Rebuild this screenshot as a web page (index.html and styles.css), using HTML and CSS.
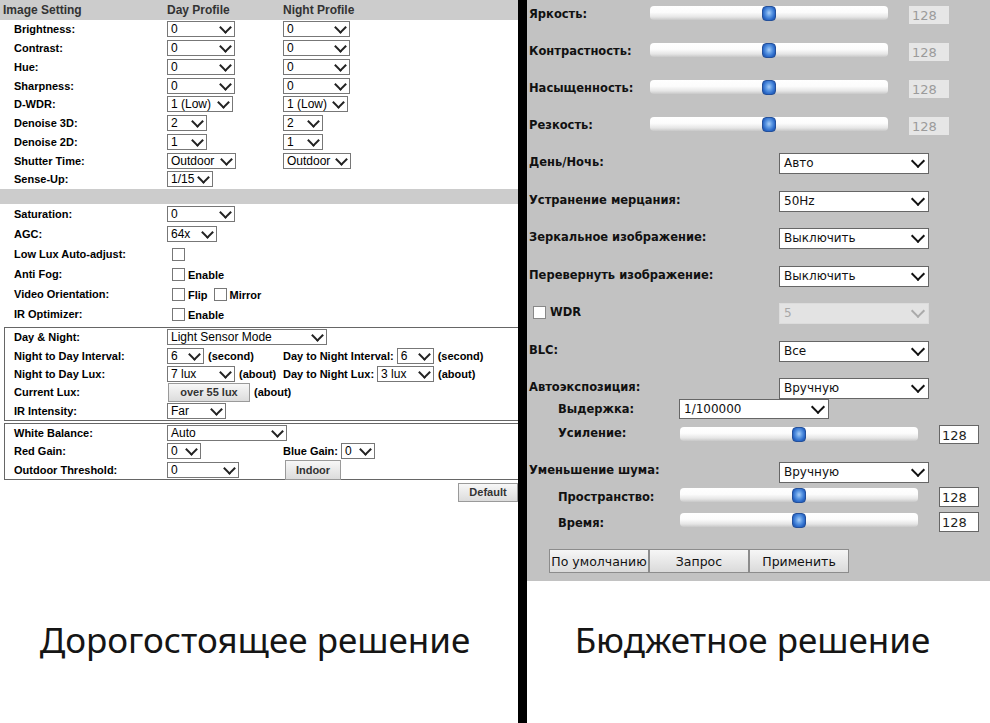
FILE: index.html
```html
<!DOCTYPE html>
<html lang="ru">
<head>
    <meta charset="UTF-8">
    <title>Image Setting</title>
    <link rel="stylesheet" href="styles.css">
</head>
<body>
<div class="page">
    <div class="col col-left">
        <div class="cam">
            <div class="cam-head">
                <span class="lbl">Image Setting</span>
                <span class="c1">Day Profile</span>
                <span class="c2">Night Profile</span>
            </div>

            <div class="row"><span class="lbl">Brightness:</span><span class="c1"><span class="sel w68">0</span></span><span class="c2"><span class="sel w67">0</span></span></div>
            <div class="row"><span class="lbl">Contrast:</span><span class="c1"><span class="sel w68">0</span></span><span class="c2"><span class="sel w67">0</span></span></div>
            <div class="row"><span class="lbl">Hue:</span><span class="c1"><span class="sel w68">0</span></span><span class="c2"><span class="sel w67">0</span></span></div>
            <div class="row"><span class="lbl">Sharpness:</span><span class="c1"><span class="sel w68">0</span></span><span class="c2"><span class="sel w67">0</span></span></div>
            <div class="row"><span class="lbl">D-WDR:</span><span class="c1"><span class="sel w66">1 (Low)</span></span><span class="c2"><span class="sel w65">1 (Low)</span></span></div>
            <div class="row"><span class="lbl">Denoise 3D:</span><span class="c1"><span class="sel w40">2</span></span><span class="c2"><span class="sel w40">2</span></span></div>
            <div class="row"><span class="lbl">Denoise 2D:</span><span class="c1"><span class="sel w40">1</span></span><span class="c2"><span class="sel w40">1</span></span></div>
            <div class="row"><span class="lbl">Shutter Time:</span><span class="c1"><span class="sel w69">Outdoor</span></span><span class="c2"><span class="sel w68">Outdoor</span></span></div>
            <div class="row"><span class="lbl">Sense-Up:</span><span class="c1"><span class="sel w46">1/15</span></span></div>

            <div class="bar"></div>

            <div class="row tall"><span class="lbl">Saturation:</span><span class="c1"><span class="sel w68">0</span></span></div>
            <div class="row tall"><span class="lbl">AGC:</span><span class="c1"><span class="sel w50">64x</span></span></div>
            <div class="row tall"><span class="lbl">Low Lux Auto-adjust:</span><span class="c1"><span class="chk"></span></span></div>
            <div class="row tall"><span class="lbl">Anti Fog:</span><span class="c1 opts"><span class="chk"></span><span class="opt">Enable</span></span></div>
            <div class="row tall"><span class="lbl">Video Orientation:</span><span class="c1 opts"><span class="chk"></span><span class="opt">Flip</span><span class="chk"></span><span class="opt">Mirror</span></span></div>
            <div class="row tall"><span class="lbl">IR Optimizer:</span><span class="c1 opts"><span class="chk"></span><span class="opt">Enable</span></span></div>

            <div class="box box-night">
                <div class="row"><span class="lbl">Day &amp; Night:</span><span class="c1"><span class="sel w160">Light Sensor Mode</span></span></div>
                <div class="row"><span class="lbl">Night to Day Interval:</span><span class="c1"><span class="sel w37">6</span><span class="note">(second)</span></span><span class="c2"><span>Day to Night Interval:</span><span class="sel w37 gap">6</span><span class="note">(second)</span></span></div>
                <div class="row"><span class="lbl">Night to Day Lux:</span><span class="c1"><span class="sel w68">7 lux</span><span class="note">(about)</span></span><span class="c2"><span>Day to Night Lux:</span><span class="sel w57 gap">3 lux</span><span class="note">(about)</span></span></div>
                <div class="row"><span class="lbl">Current Lux:</span><span class="c1"><span class="btn w82">over 55 lux</span><span class="note">(about)</span></span></div>
                <div class="row"><span class="lbl">IR Intensity:</span><span class="c1"><span class="sel w59">Far</span></span></div>
            </div>

            <div class="box box-wb">
                <div class="row"><span class="lbl">White Balance:</span><span class="c1"><span class="sel w120">Auto</span></span></div>
                <div class="row"><span class="lbl">Red Gain:</span><span class="c1"><span class="sel w34">0</span></span><span class="c2"><span>Blue Gain:</span><span class="sel w34 gap">0</span></span></div>
                <div class="row"><span class="lbl">Outdoor Threshold:</span><span class="c1"><span class="sel w72">0</span></span><span class="c2"><span class="btn w56 h20">Indoor</span></span></div>
            </div>

            <div class="foot"><span class="btn w60">Default</span></div>
        </div>
        <div class="caption">Дорогостоящее решение</div>
    </div>

    <div class="divider"></div>

    <div class="col col-right">
        <div class="cam2">
            <div class="r"><span class="name">Яркость:</span><span class="track"><span class="knob"></span></span><span class="val off">128</span></div>
            <div class="r"><span class="name">Контрастность:</span><span class="track"><span class="knob"></span></span><span class="val off">128</span></div>
            <div class="r"><span class="name">Насыщенность:</span><span class="track"><span class="knob"></span></span><span class="val off">128</span></div>
            <div class="r"><span class="name">Резкость:</span><span class="track"><span class="knob"></span></span><span class="val off">128</span></div>

            <div class="rs"><span class="name">День/Ночь:</span><span class="dd">Авто</span></div>
            <div class="rs"><span class="name">Устранение мерцания:</span><span class="dd">50Hz</span></div>
            <div class="rs"><span class="name">Зеркальное изображение:</span><span class="dd">Выключить</span></div>
            <div class="rs"><span class="name">Перевернуть изображение:</span><span class="dd">Выключить</span></div>
            <div class="rs"><span class="name wdr"><span class="chk2"></span>WDR</span><span class="dd dis">5</span></div>
            <div class="rs"><span class="name">BLC:</span><span class="dd">Все</span></div>
            <div class="rs rs-ae"><span class="name">Автоэкспозиция:</span><span class="dd">Вручную</span></div>

            <div class="sub sub-shutter"><span class="name">Выдержка:</span><span class="dd">1/100000</span></div>
            <div class="sub sub-gain"><span class="name">Усиление:</span><span class="track"><span class="knob"></span></span><span class="val">128</span></div>
            <div class="rs rs-nr"><span class="name">Уменьшение шума:</span><span class="dd">Вручную</span></div>
            <div class="sub sub-space"><span class="name">Пространство:</span><span class="track"><span class="knob"></span></span><span class="val">128</span></div>
            <div class="sub sub-time"><span class="name">Время:</span><span class="track"><span class="knob"></span></span><span class="val">128</span></div>

            <div class="btns">
                <span class="bt">По умолчанию</span>
                <span class="bt">Запрос</span>
                <span class="bt">Применить</span>
            </div>
        </div>
        <div class="caption">Бюджетное решение</div>
    </div>
</div>
</body>
</html>
```

FILE: styles.css
```css
* {
    box-sizing: border-box;
}
body {
    margin: 0;
    width: 990px;
    height: 723px;
    overflow: hidden;
    background: #fff;
    color: #000;
    font-family: "Liberation Sans", Arial, sans-serif;
}
.page {
    display: flex;
    height: 723px;
}
.col-left {
    width: 518px;
    flex: none;
}
.divider {
    width: 9px;
    flex: none;
    background: #000;
}
.col-right {
    width: 463px;
    flex: none;
}
.caption {
    padding-top: 35px;
    text-align: center;
    font-family: "Noto Sans", sans-serif;
    font-size: 35px;
    line-height: 48px;
    color: #151515;
}
.col-left .caption {
    padding-right: 8px;
}
.col-right .caption {
    padding-right: 12px;
}

/* left: camera web page */
.cam {
    height: 581px;
    font-size: 11px;
    font-weight: bold;
}
.cam-head {
    display: flex;
    align-items: center;
    height: 20px;
    background: #ccc;
    color: #333;
    font-size: 12px;
}
.cam-head .lbl {
    padding-left: 3px;
}
.row {
    display: flex;
    align-items: center;
    height: 18.75px;
}
.row.tall {
    height: 20px;
}
.lbl {
    flex: none;
    width: 167px;
    padding-left: 14px;
}
.c1 {
    flex: none;
    width: 116px;
    display: flex;
    align-items: center;
}
.c2 {
    display: flex;
    align-items: center;
}
.bar {
    height: 15.25px;
    background: #ccc;
}
.sel {
    position: relative;
    display: block;
    flex: none;
    height: 16px;
    padding-left: 3px;
    border: 1px solid #777;
    background: #fff;
    font-size: 12px;
    font-weight: normal;
    line-height: 14px;
    white-space: nowrap;
}
.sel::after {
    content: "";
    position: absolute;
    right: 4px;
    top: 1px;
    width: 7px;
    height: 7px;
    border-right: 2px solid #222;
    border-bottom: 2px solid #222;
    transform: rotate(45deg);
}
.sel.gap {
    margin-left: 3px;
}
.note {
    margin-left: 4px;
}
.chk {
    flex: none;
    width: 13px;
    height: 13px;
    margin: 0 3px 0 5px;
    border: 1px solid #777;
    background: #fff;
}
.opts {
    align-items: flex-end;
}
.opts .opt {
    line-height: 11px;
    margin-right: 1px;
}
.box {
    margin-left: 4px;
    border: 1px solid #666;
    border-right: 0;
}
.box .lbl {
    width: 162px;
    padding-left: 9px;
}
.box-night {
    margin-top: 3px;
}
.box-night .row {
    height: 18.4px;
}
.box-wb {
    margin-top: 2px;
}
.box-wb .row {
    height: 18.33px;
}
.btn {
    display: flex;
    flex: none;
    align-items: center;
    justify-content: center;
    height: 19px;
    border: 1px solid #9a9a9a;
    background: linear-gradient(#f7f7f7, #dcdcdc);
    color: #333;
    font-size: 11px;
    font-weight: bold;
}
.btn.w82 {
    margin-left: 1px;
}
.c2 .btn {
    margin-left: 2px;
}
.btn.h20 {
    height: 20px;
}
.foot {
    display: flex;
    justify-content: flex-end;
    margin-top: 3px;
}
.w34 { width: 34px; }
.w37 { width: 37px; }
.w40 { width: 40px; }
.w46 { width: 46px; }
.w50 { width: 50px; }
.w56 { width: 56px; }
.w57 { width: 57px; }
.w59 { width: 59px; }
.w60 { width: 60px; }
.w65 { width: 65px; }
.w66 { width: 66px; }
.w67 { width: 67px; }
.w68 { width: 68px; }
.w69 { width: 69px; }
.w72 { width: 72px; }
.w82 { width: 82px; }
.w120 { width: 120px; }
.w160 { width: 160px; }

/* right: budget camera page */
.cam2 {
    height: 581px;
    padding-left: 2px;
    background: #c2c2c2;
    color: #111;
    font-family: "DejaVu Sans", Verdana, sans-serif;
}
.name {
    flex: none;
    font-size: 11.5px;
    font-weight: bold;
    line-height: 14px;
    white-space: nowrap;
}
.r, .rs, .sub {
    display: flex;
    align-items: flex-start;
}
.r {
    height: 37px;
}
.r .name {
    width: 121px;
    margin-top: 7px;
}
.track {
    position: relative;
    flex: none;
    width: 238px;
    height: 14px;
    margin-top: 6px;
    border-radius: 4px;
    background: linear-gradient(#fff 0%, #fcfcfc 45%, #e6e6e6 78%, #c8c8c8 100%);
}
.knob {
    position: absolute;
    left: calc(50% - 7px);
    top: 0;
    width: 14px;
    height: 15px;
    border: 1px solid #24509a;
    border-radius: 4px;
    background: radial-gradient(ellipse at 50% 45%, #a9cdf7 0%, #5e9ae4 35%, #2a68c8 70%, #1c4f9f 100%);
}
.val {
    flex: none;
    width: 40px;
    height: 19px;
    margin: 6px 0 0 21px;
    padding-left: 2px;
    border: 1px solid #666;
    background: #fff;
    color: #222;
    font-size: 13px;
    line-height: 19px;
}
.val.off {
    height: 18px;
    border-color: #e6e6e6;
    background: #e6e6e6;
    color: #9b9b9b;
    line-height: 18px;
}
.rs {
    height: 37.5px;
}
.rs .name {
    width: 250px;
    margin-top: 7px;
}
.dd {
    position: relative;
    flex: none;
    width: 150px;
    height: 21px;
    margin-top: 5px;
    padding-left: 4px;
    border: 1px solid #666;
    background: #fff;
    font-size: 12px;
    line-height: 19px;
}
.dd::after {
    content: "";
    position: absolute;
    right: 5px;
    top: 2px;
    width: 8px;
    height: 8px;
    border-right: 2px solid #111;
    border-bottom: 2px solid #111;
    transform: rotate(45deg);
}
.dd.dis {
    border-color: #dcdcdc;
    background: #e3e3e3;
    color: #a8a8a8;
}
.dd.dis::after {
    border-color: #aaa;
}
.wdr {
    display: flex;
    align-items: center;
}
.chk2 {
    width: 13px;
    height: 13px;
    margin: 0 4px 0 4px;
    border: 1px solid #888;
    background: #fff;
}
.rs-ae {
    height: 26px;
}
.sub {
    padding-left: 29px;
}
.sub .name {
    width: 121px;
}
.sub .track {
    margin-left: 1px;
}
.sub-shutter {
    height: 21px;
}
.sub-shutter .name {
    margin-top: 3px;
}
.sub-shutter .dd {
    height: 20px;
    margin-top: 0;
    line-height: 18px;
}
.sub-gain {
    height: 28px;
}
.sub-gain .name {
    margin-top: 6px;
}
.sub-gain .track {
    margin-top: 7px;
}
.sub-gain .val {
    margin-top: 5px;
}
.rs-nr {
    height: 35px;
}
.rs-nr .name {
    margin-top: 15px;
}
.rs-nr .dd {
    margin-top: 14px;
}
.sub-space {
    height: 27px;
}
.sub-space .name {
    margin-top: 7px;
}
.sub-space .track {
    margin-top: 5px;
}
.sub-space .val {
    margin-top: 4px;
    height: 20px;
}
.sub-time {
    height: 25px;
}
.sub-time .name {
    margin-top: 6px;
}
.sub-time .track {
    margin-top: 3px;
}
.sub-time .val {
    margin-top: 2px;
    height: 20px;
}
.btns {
    display: flex;
    margin-top: 14px;
    padding-left: 20px;
}
.bt {
    display: flex;
    align-items: center;
    justify-content: center;
    width: 100px;
    height: 24px;
    border: 1px solid #8c8c8c;
    background: linear-gradient(#f6f6f6, #dadada);
    font-size: 12.5px;
}
```
